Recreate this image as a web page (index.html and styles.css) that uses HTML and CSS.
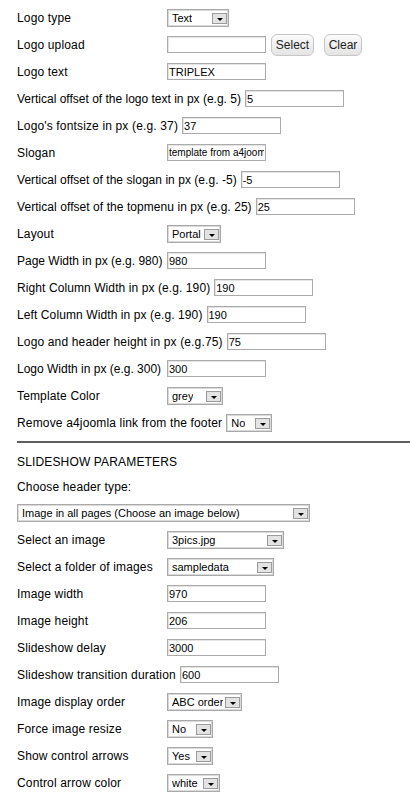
FILE: index.html
```html
<!DOCTYPE html>
<html>
<head>
<meta charset="utf-8">
<link rel="stylesheet" href="styles.css">
</head>
<body>
<div class="form">
  <div class="row"><span class="lbl">Logo type</span><span class="sel w62"><span class="val">Text</span><span class="arr"></span></span></div>
  <div class="row"><span class="lbl">Logo upload</span><input class="inp" type="text" value=""><button class="btn b-select">Select</button><button class="btn b-clear">Clear</button></div>
  <div class="row"><span class="lbl">Logo text</span><input class="inp" type="text" value="TRIPLEX"></div>
  <div class="row"><span class="lbl plain">Vertical offset of the logo text in px (e.g. 5)</span><input class="inp" type="text" value="5"></div>
  <div class="row"><span class="lbl">Logo's fontsize in px (e.g. 37)</span><input class="inp" type="text" value="37"></div>
  <div class="row"><span class="lbl">Slogan</span><input class="inp small" type="text" value="template from a4joomla"></div>
  <div class="row"><span class="lbl tight">Vertical offset of the slogan in px (e.g. -5)</span><input class="inp" type="text" value="-5"></div>
  <div class="row"><span class="lbl tight2">Vertical offset of the topmenu in px (e.g. 25)</span><input class="inp" type="text" value="25"></div>
  <div class="row"><span class="lbl">Layout</span><span class="sel w54"><span class="val">Portal</span><span class="arr"></span></span></div>
  <div class="row"><span class="lbl plain">Page Width in px (e.g. 980)</span><input class="inp" type="text" value="980"></div>
  <div class="row"><span class="lbl mid">Right Column Width in px (e.g. 190)</span><input class="inp" type="text" value="190"></div>
  <div class="row"><span class="lbl mid2">Left Column Width in px (e.g. 190)</span><input class="inp" type="text" value="190"></div>
  <div class="row"><span class="lbl">Logo and header height in px (e.g.75)</span><input class="inp" type="text" value="75"></div>
  <div class="row"><span class="lbl plain">Logo Width in px (e.g. 300)</span><input class="inp" type="text" value="300"></div>
  <div class="row"><span class="lbl">Template Color</span><span class="sel w56"><span class="val">grey</span><span class="arr"></span></span></div>
  <div class="row"><span class="lbl loose">Remove a4joomla link from the footer</span><span class="sel w46"><span class="val">No</span><span class="arr"></span></span></div>

  <div class="sep"></div>

  <div class="row short"><span class="lbl">SLIDESHOW PARAMETERS</span></div>
  <div class="row short"><span class="lbl">Choose header type:</span></div>
  <div class="row"><span class="sel w293"><span class="val">Image in all pages (Choose an image below)</span><span class="arr"></span></span></div>
  <div class="row"><span class="lbl">Select an image</span><span class="sel w117"><span class="val">3pics.jpg</span><span class="arr"></span></span></div>
  <div class="row"><span class="lbl">Select a folder of images</span><span class="sel w107"><span class="val">sampledata</span><span class="arr"></span></span></div>
  <div class="row"><span class="lbl">Image width</span><input class="inp" type="text" value="970"></div>
  <div class="row"><span class="lbl">Image height</span><input class="inp" type="text" value="206"></div>
  <div class="row"><span class="lbl">Slideshow delay</span><input class="inp" type="text" value="3000"></div>
  <div class="row"><span class="lbl wide">Slideshow transition duration</span><input class="inp" type="text" value="600"></div>
  <div class="row"><span class="lbl">Image display order</span><span class="sel w75"><span class="val">ABC order</span><span class="arr"></span></span></div>
  <div class="row"><span class="lbl">Force image resize</span><span class="sel w46"><span class="val">No</span><span class="arr"></span></span></div>
  <div class="row"><span class="lbl">Show control arrows</span><span class="sel w46"><span class="val">Yes</span><span class="arr"></span></span></div>
  <div class="row"><span class="lbl">Control arrow color</span><span class="sel w53"><span class="val">white</span><span class="arr"></span></span></div>
</div>
</body>
</html>
```

FILE: styles.css
```css
body {
  margin: 0;
  background: #fff;
  color: #000;
  font-family: "Liberation Sans", Arial, sans-serif;
  font-size: 12px;
}

.form {
  padding: 4px 0 0 17px;
}

.row {
  display: flex;
  align-items: center;
  gap: 4px;
  height: 27px;
}

.row.short {
  height: 25px;
}

.lbl {
  min-width: 146px;
  white-space: nowrap;
  letter-spacing: 0.15px;
}

.lbl.plain {
  letter-spacing: 0;
}

.lbl.tight {
  letter-spacing: 0.04px;
}

.lbl.tight2 {
  letter-spacing: 0.06px;
}

.lbl.mid {
  letter-spacing: 0.09px;
}

.lbl.mid2 {
  letter-spacing: 0.1px;
}

.lbl.loose {
  letter-spacing: 0.16px;
}

.lbl.wide {
  letter-spacing: 0.19px;
}

.inp {
  width: 99px;
  height: 17px;
  box-sizing: border-box;
  margin: 0;
  padding: 0 1px;
  border: 1px solid #ababab;
  box-shadow: inset 1px 1px 0 #e4e4e4;
  font-family: "Liberation Sans", Arial, sans-serif;
  font-size: 11px;
  color: #000;
  background: #fff;
  outline: none;
}

.inp.small {
  font-size: 10px;
}

.sel {
  display: inline-flex;
  align-items: center;
  justify-content: space-between;
  height: 18px;
  box-sizing: border-box;
  border: 1px solid #a9a9a9;
  box-shadow: inset 0 0 0 1px #dadada;
  background: #fff;
  font-size: 11px;
  padding: 0 1px 0 4px;
  overflow: hidden;
  white-space: nowrap;
}

.val {
  padding-top: 1px;
  overflow: hidden;
}

.arr {
  position: relative;
  flex: none;
  width: 15px;
  height: 11px;
  box-sizing: border-box;
  align-self: flex-end;
  margin-bottom: 2px;
  border: 1px solid #9c9c9c;
  background: #e3e3e3;
}

.arr::after {
  content: "";
  position: absolute;
  left: 4px;
  top: 4px;
  border-left: 3px solid transparent;
  border-right: 3px solid transparent;
  border-top: 3px solid #000;
}

.w46 { width: 46px; }
.w53 { width: 53px; }
.w54 { width: 54px; }
.w56 { width: 56px; }
.w62 { width: 62px; }
.w75 { width: 75px; }
.w107 { width: 107px; }
.w117 { width: 117px; }
.w293 { width: 293px; }

.btn {
  height: 22px;
  box-sizing: border-box;
  margin: 0;
  padding: 0;
  border: 1px solid #c6c6c6;
  border-radius: 6px;
  background: linear-gradient(#fbfbfb, #e4e4e4);
  font-family: "Liberation Sans", Arial, sans-serif;
  font-size: 12px;
  color: #222;
}

.b-select {
  width: 43px;
  margin-left: 1px;
}

.b-clear {
  width: 38px;
  margin-left: 6px;
}

.sep {
  height: 2px;
  background: #5e5e5e;
  margin: 5px 0 6px;
}
```
